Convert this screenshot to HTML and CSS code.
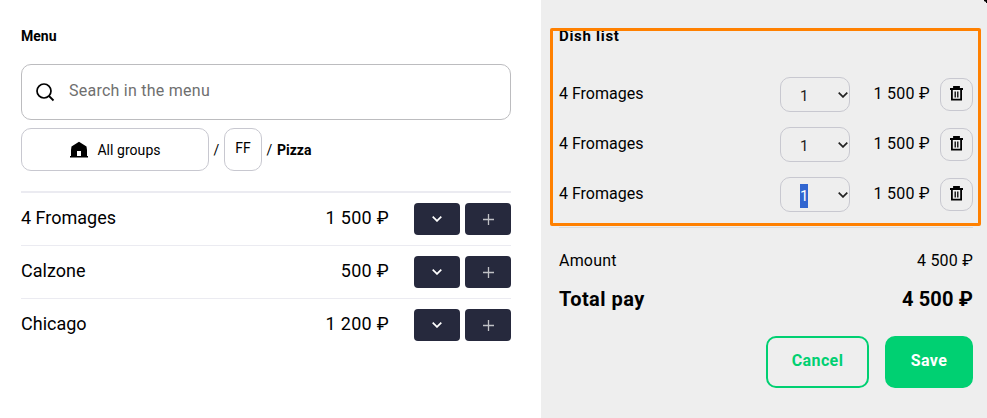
FILE: index.html
```
<!DOCTYPE html>
<html lang="en">
<head>
	<meta charset="utf-8">
	<title>Menu</title>
	<link rel="stylesheet" href="styles.css">
</head>
<body>
	<svg class="sprite" width="0" height="0">
		<symbol id="arrow" viewBox="0 0 10 6">
			<path d="M0.7 0.7L5 4.9L9.3 0.7" fill="none" stroke="currentColor" stroke-width="1.7"/>
		</symbol>
		<symbol id="plus" viewBox="0 0 11 11">
			<path d="M5.5 0V11M0 5.5H11" fill="none" stroke="currentColor" stroke-width="1.3"/>
		</symbol>
		<symbol id="trash" viewBox="0 0 13 15">
			<path d="M4 2.5V1H9V2.5M0 3H13M1.9 3V13.6H11.1V3" fill="none" stroke="currentColor" stroke-width="1.8"/>
			<path d="M5.2 5.5V11.5M7.8 5.5V11.5" fill="none" stroke="currentColor" stroke-width="1.3"/>
		</symbol>
	</svg>

	<main class="menu">
		<h2>Menu</h2>
		<label class="search">
			<svg width="19" height="19" viewBox="0 0 19 19"><circle cx="8" cy="8" r="7" fill="none" stroke="#000" stroke-width="1.7"/><path d="M13 13L17.5 17.5" stroke="#000" stroke-width="1.8"/></svg>
			<input type="text" class="search-input" placeholder="Search in the menu">
		</label>

		<nav class="groups">
			<a class="group group-all">
				<svg width="20" height="17" viewBox="0 0 20 17"><path d="M10 0.8L2.5 5.5L2 9V15H1V16.4H19V15H18V9L17.5 5.5ZM8 15V10H12V15Z" fill="#000" fill-rule="evenodd"/></svg>
				<span>All groups</span>
			</a>
			<span class="slash">/</span>
			<a class="group group-short">FF</a>
			<span class="slash">/</span>
			<b class="current">Pizza</b>
		</nav>

		<ul class="dishes">
			<li>
				<span class="dish-name">4 Fromages</span>
				<span class="dish-price">1 500 ₽</span>
				<button class="dark"><svg width="10" height="6"><use href="#arrow"/></svg></button>
				<button class="dark add"><svg width="11" height="11"><use href="#plus"/></svg></button>
			</li>
			<li>
				<span class="dish-name">Calzone</span>
				<span class="dish-price">500 ₽</span>
				<button class="dark"><svg width="10" height="6"><use href="#arrow"/></svg></button>
				<button class="dark add"><svg width="11" height="11"><use href="#plus"/></svg></button>
			</li>
			<li>
				<span class="dish-name">Chicago</span>
				<span class="dish-price">1 200 ₽</span>
				<button class="dark"><svg width="10" height="6"><use href="#arrow"/></svg></button>
				<button class="dark add"><svg width="11" height="11"><use href="#plus"/></svg></button>
			</li>
		</ul>
	</main>

	<aside class="order">
		<svg class="corner" width="3" height="3"><path d="M0 0H3V3L2 3V2L0 1Z" fill="#000"/></svg>
		<h2 class="order-title">Dish list</h2>
		<ul class="order-list">
			<li>
				<span class="order-name">4 Fromages</span>
				<div class="count"><span>1</span><svg width="10" height="6"><use href="#arrow"/></svg></div>
				<span class="order-price">1 500 ₽</span>
				<button class="remove"><svg width="13" height="15"><use href="#trash"/></svg></button>
			</li>
			<li>
				<span class="order-name">4 Fromages</span>
				<div class="count"><span>1</span><svg width="10" height="6"><use href="#arrow"/></svg></div>
				<span class="order-price">1 500 ₽</span>
				<button class="remove"><svg width="13" height="15"><use href="#trash"/></svg></button>
			</li>
			<li>
				<span class="order-name">4 Fromages</span>
				<div class="count"><span class="selected">1</span><svg width="10" height="6"><use href="#arrow"/></svg></div>
				<span class="order-price">1 500 ₽</span>
				<button class="remove"><svg width="13" height="15"><use href="#trash"/></svg></button>
			</li>
		</ul>

		<div class="amount"><span>Amount</span><span class="sum">4 500 ₽</span></div>
		<div class="total"><span>Total pay</span><span class="sum">4 500 ₽</span></div>

		<div class="actions">
			<button class="btn cancel">Cancel</button>
			<button class="btn save">Save</button>
		</div>
		<div class="highlight"></div>
	</aside>
</body>
</html>
```

FILE: styles.css
```
* {
	box-sizing: border-box;
}

body {
	margin: 0;
	display: flex;
	height: 418px;
	overflow: hidden;
	font-family: Roboto, "Noto Sans", sans-serif;
	font-size: 16px;
	color: #000;
	background: #fff;
}

.sprite {
	position: absolute;
}

svg {
	display: block;
	flex: none;
}

h2 {
	margin: 0;
	font-size: 14px;
	line-height: 20px;
	font-weight: bold;
}

ul {
	list-style: none;
	margin: 0;
	padding: 0;
}

button {
	display: flex;
	align-items: center;
	justify-content: center;
	padding: 0;
	border: 0;
	font-family: inherit;
}

/* left side */
.menu {
	width: 541px;
	padding: 26px 30px 0 21px;
}

.search {
	display: flex;
	align-items: center;
	height: 56px;
	margin-top: 18px;
	padding-left: 14px;
	border: 1px solid #bcbcbf;
	border-radius: 10px;
}

.search-input {
	flex: 1;
	margin-left: 14px;
	padding: 0 0 3px;
	border: 0;
	outline: 0;
	background: none;
	font: inherit;
	letter-spacing: 0.25px;
}

.search-input::placeholder {
	color: #6f6f6f;
}

.groups {
	display: flex;
	align-items: center;
	margin-top: 8px;
	font-size: 14px;
}

.group {
	display: flex;
	align-items: center;
	justify-content: center;
	height: 43px;
	border: 1px solid #c8c8d0;
	border-radius: 10px;
}

.group-all {
	width: 188px;
	gap: 8px;
	letter-spacing: 0.05px;
}

.group-short {
	width: 38px;
	padding-bottom: 3px;
}

.slash {
	width: 15px;
	text-align: center;
}

.dishes {
	margin-top: 20px;
	border-top: 2px solid #ebebf1;
}

.dishes li {
	display: flex;
	align-items: center;
	height: 53px;
	border-bottom: 1px solid #ebebf1;
	font-size: 18px;
}

.dishes li:last-child {
	border-bottom-color: transparent;
}

.dish-name {
	flex: 1;
	padding-bottom: 3px;
}

.dish-price {
	margin-right: 25px;
	padding-bottom: 3px;
	letter-spacing: 0.3px;
}

.dark {
	width: 46px;
	height: 32px;
	border-radius: 4px;
	background: #26293d;
	color: #fff;
}

.add {
	margin-left: 5px;
	color: #c0c1c6;
}

/* right side */
.order {
	position: relative;
	width: 446px;
	padding: 26px 14px 0 18px;
	background: #eee;
}

.corner {
	position: absolute;
	top: 0;
	right: 0;
}

.order-title {
	font-size: 15px;
	letter-spacing: 0.7px;
}

.order-list {
	height: 182px;
	padding-top: 23px;
	border-bottom: 1px solid #dcdcdc;
}

.order-list li {
	display: flex;
	align-items: center;
	height: 50px;
}

.order-name {
	flex: 1;
	padding-bottom: 2px;
}

.count {
	display: flex;
	align-items: center;
	justify-content: space-between;
	width: 70px;
	height: 35px;
	padding: 2px 1px 0 19px;
	border: 1px solid #c8c8d0;
	border-radius: 10px;
	color: #222;
}

.count span {
	height: 24px;
	line-height: 24px;
	margin-top: 2px;
	font-size: 15px;
}

.count .selected {
	background: #3166d0;
	color: #fff;
}

.order-price {
	width: 80px;
	padding-bottom: 2px;
	text-align: right;
	letter-spacing: 0.3px;
}

.remove {
	width: 33px;
	height: 33px;
	margin-left: 10px;
	padding-bottom: 1px;
	border: 1px solid #c8c8d0;
	border-radius: 10px;
	background: none;
	color: #000;
}

.amount,
.total {
	display: flex;
	justify-content: space-between;
}

.amount {
	margin-top: 21px;
	line-height: 24px;
	letter-spacing: 0.2px;
}

.total {
	margin-top: 11px;
	font-size: 20px;
	line-height: 30px;
	font-weight: bold;
	letter-spacing: 0.45px;
}

.total .sum {
	letter-spacing: 0.15px;
}

.actions {
	display: flex;
	justify-content: flex-end;
	gap: 16px;
	margin-top: 22px;
}

.btn {
	height: 52px;
	padding-bottom: 3px;
	border: 2px solid #00d072;
	border-radius: 10px;
	font-size: 16px;
	font-weight: bold;
	letter-spacing: 0.4px;
}

.cancel {
	width: 103px;
	background: none;
	color: #00d072;
}

.save {
	width: 88px;
	background: #00d072;
	color: #fff;
}

/* frame over the dish list */
.highlight {
	position: absolute;
	left: 9px;
	top: 28px;
	width: 431px;
	height: 198px;
	border: 3px solid #ff8000;
	border-radius: 2px;
}
```
